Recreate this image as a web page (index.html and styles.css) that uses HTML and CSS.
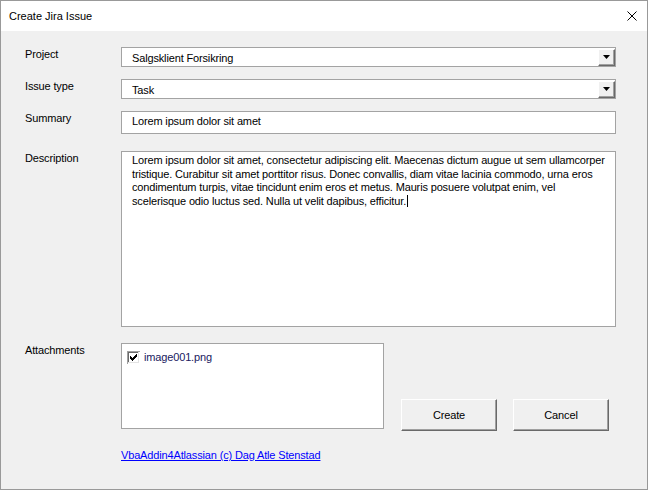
FILE: index.html
```html
<!DOCTYPE html>
<html>
<head>
<meta charset="utf-8">
<title>Create Jira Issue</title>
<link rel="stylesheet" href="styles.css">
</head>
<body>
<div class="window">
  <div class="titlebar">
    <span class="title">Create Jira Issue</span>
    <svg class="close" width="10" height="10" viewBox="0 0 10 10"><path d="M0.5 0.5L9.5 9.5M9.5 0.5L0.5 9.5" stroke="#000" stroke-width="1" fill="none"/></svg>
  </div>
  <div class="content">
    <div class="row">
      <div class="label">Project</div>
      <div class="combo">
        <span class="combo-text">Salgsklient Forsikring</span>
        <span class="drop"><svg width="7" height="4" viewBox="0 0 7 4"><polygon points="0,0 7,0 3.5,4" fill="#000"/></svg></span>
      </div>
    </div>
    <div class="row r-gap12">
      <div class="label">Issue type</div>
      <div class="combo">
        <span class="combo-text">Task</span>
        <span class="drop"><svg width="7" height="4" viewBox="0 0 7 4"><polygon points="0,0 7,0 3.5,4" fill="#000"/></svg></span>
      </div>
    </div>
    <div class="row r-gap12">
      <div class="label">Summary</div>
      <div class="textbox">Lorem ipsum dolor sit amet</div>
    </div>
    <div class="row r-gap17">
      <div class="label">Description</div>
      <div class="memo">Lorem ipsum dolor sit amet, consectetur adipiscing elit. Maecenas dictum augue ut sem ullamcorper<br>tristique. Curabitur sit amet porttitor risus. Donec convallis, diam vitae lacinia commodo, urna eros<br>condimentum turpis, vitae tincidunt enim eros et metus. Mauris posuere volutpat enim, vel<br>scelerisque odio luctus sed. Nulla ut velit dapibus, efficitur.<span class="caret"></span></div>
    </div>
    <div class="row r-gap16">
      <div class="label">Attachments</div>
      <div class="listbox">
        <div class="item">
          <svg class="check" width="13" height="13" viewBox="0 0 13 13" shape-rendering="crispEdges">
            <rect x="0" y="0" width="13" height="13" fill="#fff"/>
            <path d="M0 0h13v1H0zM0 0h1v13H0z" fill="#a0a0a0"/>
            <path d="M1 1h11v1H1zM1 1h1v11H1z" fill="#696969"/>
            <path d="M1 11h11v1H1zM11 1h1v11h-1z" fill="#e3e3e3"/>
            <path d="M3 5h1v3H3zM4 6h1v3H4zM5 7h1v3H5zM6 6h1v3H6zM7 5h1v3H7zM8 4h1v3H8zM9 3h1v3H9z" fill="#000"/>
          </svg>
          <span class="item-text">image001.png</span>
        </div>
      </div>
      <div class="buttons">
        <div class="btn">Create</div>
        <div class="btn">Cancel</div>
      </div>
    </div>
    <div class="row r-gap18 r-link">
      <a class="link" href="#">VbaAddin4Atlassian (c) Dag Atle Stenstad</a>
    </div>
  </div>
</div>
</body>
</html>
```

FILE: styles.css
```css
* {
  box-sizing: border-box;
}

html, body {
  margin: 0;
  padding: 0;
  background: #f0f0f0;
}

body {
  width: 648px;
  height: 490px;
  overflow: hidden;
  font-family: "Liberation Sans", Arial, sans-serif;
  font-size: 11px;
  line-height: 13px;
  color: #000;
  letter-spacing: -0.15px;
}

.window {
  width: 648px;
  height: 490px;
  border: 1px solid #999;
  display: flex;
  flex-direction: column;
  background: #f0f0f0;
}

.titlebar {
  flex: none;
  height: 30px;
  background: #fff;
  display: flex;
  align-items: center;
  justify-content: space-between;
  padding: 0 10px 0 8px;
}

.title {
  letter-spacing: 0;
}

.close {
  display: block;
}

.content {
  flex: 1;
  padding: 16px 0 0 24px;
}

.row {
  display: flex;
  align-items: flex-start;
}

.r-gap12 { margin-top: 12px; }
.r-gap16 { margin-top: 16px; }
.r-gap17 { margin-top: 17px; }
.r-gap18 { margin-top: 18px; }

.r-link {
  padding-left: 96px;
}

.label {
  flex: none;
  width: 96px;
  padding-top: 1px;
}

.combo {
  width: 495px;
  height: 20px;
  border: 1px solid #a3a3a3;
  background: #fff;
  display: flex;
  align-items: flex-start;
}

.combo-text {
  flex: 1;
  padding: 4px 0 0 10px;
}

.drop {
  flex: none;
  width: 17px;
  height: 17px;
  margin-top: 1px;
  border: 1px solid;
  border-color: #fff #696969 #696969 #fff;
  box-shadow: inset -1px -1px 0 #a0a0a0;
  background: #f0f0f0;
  display: flex;
  align-items: center;
  justify-content: center;
}

.drop svg {
  display: block;
  margin-left: -1px;
  margin-top: -1px;
}

.textbox {
  width: 495px;
  height: 23px;
  border: 1px solid #a3a3a3;
  background: #fff;
  padding: 3px 10px 0 10px;
}

.memo {
  width: 495px;
  height: 176px;
  border: 1px solid #a3a3a3;
  background: #fff;
  padding: 2px 10px 0 10px;
  line-height: 13.67px;
  white-space: nowrap;
}

.caret {
  display: inline-block;
  width: 1px;
  height: 12px;
  background: #000;
  vertical-align: -2px;
  margin-left: 1px;
}

.listbox {
  flex: none;
  width: 263px;
  height: 86px;
  border: 1px solid #a3a3a3;
  background: #fff;
  padding: 7px 5px;
}

.item {
  display: flex;
  align-items: center;
}

.check {
  display: block;
  flex: none;
  margin-right: 4px;
}

.item-text {
  color: #202060;
}

.buttons {
  display: flex;
  gap: 16px;
  margin-left: 17px;
  margin-top: 56px;
}

.btn {
  width: 96px;
  height: 32px;
  border: 1px solid;
  border-color: #fff #696969 #696969 #fff;
  box-shadow: inset -1px -1px 0 #a0a0a0;
  background: #f0f0f0;
  display: flex;
  align-items: center;
  justify-content: center;
}

.link {
  color: #0000ff;
  text-decoration: underline;
}
```
